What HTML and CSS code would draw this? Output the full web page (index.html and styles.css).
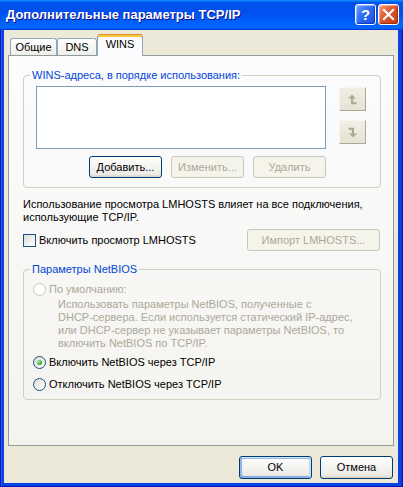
FILE: index.html
```html
<!DOCTYPE html>
<html lang="ru">
<head>
<meta charset="utf-8">
<title>Дополнительные параметры TCP/IP</title>
<link rel="stylesheet" href="styles.css">
</head>
<body>
<div class="window">
  <div class="titlebar">
    <span class="title">Дополнительные параметры TCP/IP</span>
    <div class="controls">
      <span class="tb-btn tb-help">?</span>
      <span class="tb-btn tb-close"><svg width="13" height="13" viewBox="0 0 13 13"><path d="M2 2L11 11M11 2L2 11" stroke="#fff" stroke-width="2.2" stroke-linecap="square"/></svg></span>
    </div>
  </div>
  <div class="client">
    <div class="tabs">
      <span class="tab tab-general">Общие</span>
      <span class="tab tab-dns">DNS</span>
      <span class="tab tab-wins selected">WINS</span>
    </div>
    <div class="panel">
      <fieldset class="group">
        <legend>WINS-адреса, в порядке использования:</legend>
        <div class="wins-body">
          <div class="listbox"></div>
          <div class="order-buttons">
            <span class="order-btn"><svg width="9" height="11" viewBox="0 0 9 11"><path d="M0 4.5L4 0.5L8 4.5H5.2V8.2H8.5V10.2H3V4.5Z" fill="#aca899"/></svg></span>
            <span class="order-btn"><svg width="9" height="11" viewBox="0 0 9 11"><path d="M0.5 0.8H6V6.5H9L5 10.5L1 6.5H3.8V2.8H0.5Z" fill="#aca899"/></svg></span>
          </div>
          <div class="btn-row">
            <span class="btn">Добавить...</span>
            <span class="btn disabled">Изменить...</span>
            <span class="btn disabled">Удалить</span>
          </div>
        </div>
      </fieldset>
      <p class="note">Использование просмотра LMHOSTS влияет на все подключения,<br>использующие TCP/IP.</p>
      <div class="lmhosts-row">
        <span class="check"><span class="checkbox"></span>Включить просмотр LMHOSTS</span>
        <span class="btn disabled btn-import">Импорт LMHOSTS...</span>
      </div>
      <fieldset class="group group-netbios">
        <legend>Параметры NetBIOS</legend>
        <div class="netbios-body">
          <div class="radio-row disabled"><span class="radio"></span>По умолчанию:</div>
          <p class="desc disabled">Использовать параметры NetBIOS, полученные с<br>DHCP-сервера. Если используется статический IP-адрес,<br>или DHCP-сервер не указывает параметры NetBIOS, то<br>включить NetBIOS по TCP/IP.</p>
          <div class="radio-row row-enable"><span class="radio checked"></span>Включить NetBIOS через TCP/IP</div>
          <div class="radio-row row-disable"><span class="radio"></span>Отключить NetBIOS через TCP/IP</div>
        </div>
      </fieldset>
    </div>
    <div class="footer">
      <span class="btn default">OK</span>
      <span class="btn">Отмена</span>
    </div>
  </div>
</div>
</body>
</html>
```

FILE: styles.css
```css
* { box-sizing: border-box; }
html, body { margin: 0; padding: 0; }
body {
  width: 403px;
  height: 487px;
  overflow: hidden;
  font-family: "Liberation Sans", Arial, sans-serif;
  font-size: 11px;
  line-height: 13px;
  color: #000;
  background: #0831d9;
}
.window {
  width: 403px;
  height: 487px;
  display: flex;
  flex-direction: column;
  background: #0a43e4;
  box-shadow: inset 1px 0 #0019b8, inset -1px 0 #0019b8, inset 0 -1px #0019b8, inset 2px 0 #1c5ef0, inset -2px 0 #0b3ad8;
}
.titlebar {
  height: 30px;
  flex: none;
  display: flex;
  align-items: flex-start;
  justify-content: space-between;
  padding: 0 4px 0 6px;
  background: linear-gradient(180deg, #0997ff, #0053ee 8%, #0050ee 40%, #0066ff 88%, #0066ff 93%, #005bff 95%, #003dd7 96%, #003dd7);
}
.title {
  font: bold 13px/30px "Liberation Sans", Arial, sans-serif;
  color: #fff;
  text-shadow: 1px 1px #0f1089;
  white-space: nowrap;
}
.controls {
  display: flex;
  gap: 2px;
  padding-top: 4px;
}
.tb-btn {
  width: 21px;
  height: 21px;
  border: 1px solid #fff;
  border-radius: 3px;
  display: flex;
  align-items: center;
  justify-content: center;
  color: #fff;
  font: bold 15px/1 "Liberation Sans", Arial, sans-serif;
}
.tb-help {
  background: linear-gradient(135deg, #6b9cff 0%, #2f6cf5 45%, #1a50e0 100%);
  box-shadow: inset -1px -1px 1px #1437b8, inset 1px 1px 1px rgba(255,255,255,.45);
}
.tb-close {
  background: linear-gradient(135deg, #f39a7a 0%, #e2572f 45%, #c83a16 100%);
  box-shadow: inset -1px -1px 1px #9c2a0d, inset 1px 1px 1px rgba(255,255,255,.4);
}
.client {
  flex: 1;
  margin: 0 5px 4px 4px;
  background: #ece9d8;
  display: flex;
  flex-direction: column;
}
.tabs {
  height: 25px;
  flex: none;
  display: flex;
  align-items: flex-end;
  padding-left: 6px;
}
.tab {
  height: 17px;
  border: 1px solid #91a7b4;
  border-bottom: none;
  border-radius: 3px 3px 0 0;
  background: linear-gradient(180deg, #fff, #fafaf9 26%, #f0f0ea 95%, #ecebe5);
  text-align: center;
  padding-top: 2px;
  white-space: nowrap;
}
.tab-general { width: 47px; }
.tab-dns { width: 40px; }
.tab-wins { width: 46px; }
.tab.selected {
  height: 22px;
  margin-bottom: -1px;
  position: relative;
  z-index: 1;
  background: #fcfcfe;
  border-top: 1px solid #e68b2c;
  box-shadow: inset 0 2px #ffc73c;
  padding-top: 3px;
}
.panel {
  height: 391px;
  flex: none;
  margin: 0 4px;
  border: 1px solid #919b9c;
  background: linear-gradient(180deg, #fcfcfe, #f4f3ee);
  padding: 13px 12px 0 14px;
}
.group {
  margin: 0;
  padding: 0;
  border: 1px solid #d0d0bf;
  border-radius: 4px;
  min-width: 0;
}
.group legend {
  color: #0046d5;
  padding: 0 2px;
  margin-left: 6px;
  line-height: 13px;
}
.wins-body {
  display: grid;
  grid-template-columns: 290px 27px;
  column-gap: 13px;
  padding: 4px 0 9px 12px;
}
.listbox {
  height: 63px;
  background: #fff;
  border: 1px solid #7f9db9;
}
.order-buttons {
  display: flex;
  flex-direction: column;
  gap: 9px;
  padding-top: 1px;
}
.order-btn {
  width: 27px;
  height: 24px;
  display: flex;
  align-items: center;
  justify-content: center;
  background: linear-gradient(180deg, #f1efe4, #e6e3d5);
  border: 1px solid;
  border-color: #f7f6f0 #aca899 #aca899 #f7f6f0;
}
.btn-row {
  grid-column: 1;
  display: flex;
  justify-content: flex-end;
  gap: 9px;
  margin-top: 7px;
}
.btn {
  width: 73px;
  height: 22px;
  display: inline-flex;
  align-items: center;
  justify-content: center;
  border: 1px solid #003c74;
  border-radius: 3px;
  background: linear-gradient(180deg, #fff, #ecebe6 86%, #d6d0c5);
  white-space: nowrap;
}
.btn.disabled {
  border-color: #c9c7ba;
  background: #f5f4ea;
  color: #aca899;
}
.btn.default {
  box-shadow: inset -1px 1px #cee7ff, inset 1px 2px #98b8ea, inset -2px 2px #bcd4f6, inset 1px -1px #89ade4, inset 2px -2px #89ade4;
}
.note {
  margin: 10px 0 0;
}
.lmhosts-row {
  margin-top: 5px;
  display: flex;
  align-items: center;
  justify-content: space-between;
  padding-right: 1px;
}
.check {
  display: flex;
  align-items: center;
}
.checkbox {
  width: 13px;
  height: 13px;
  border: 1px solid #1c5180;
  background: linear-gradient(135deg, #dcdcd7, #fff);
  margin-right: 3px;
}
.btn-import {
  width: 133px;
}
.group-netbios {
  margin-top: 12px;
}
.netbios-body {
  padding: 7px 0 8px 9px;
}
.radio-row {
  height: 13px;
  display: flex;
  align-items: center;
}
.radio {
  width: 13px;
  height: 13px;
  flex: none;
  border-radius: 50%;
  border: 1px solid #1c5180;
  background: linear-gradient(135deg, #dcdcd7, #fff);
  margin-right: 3px;
  display: flex;
  align-items: center;
  justify-content: center;
}
.radio.checked::after {
  content: "";
  width: 5px;
  height: 5px;
  border-radius: 50%;
  background: radial-gradient(circle at 35% 35%, #a8e8a2, #21a121 75%);
}
.disabled { color: #aca899; }
.radio-row.disabled .radio {
  border-color: #cac8bb;
  background: #fff;
}
.desc {
  margin: 2px 0 0 25px;
}
.row-enable { margin-top: 6px; }
.row-disable { margin-top: 9px; }
.footer {
  flex: none;
  display: flex;
  justify-content: flex-end;
  gap: 8px;
  padding: 10px 5px 4px 0;
}
.footer .btn { height: 23px; }
```
